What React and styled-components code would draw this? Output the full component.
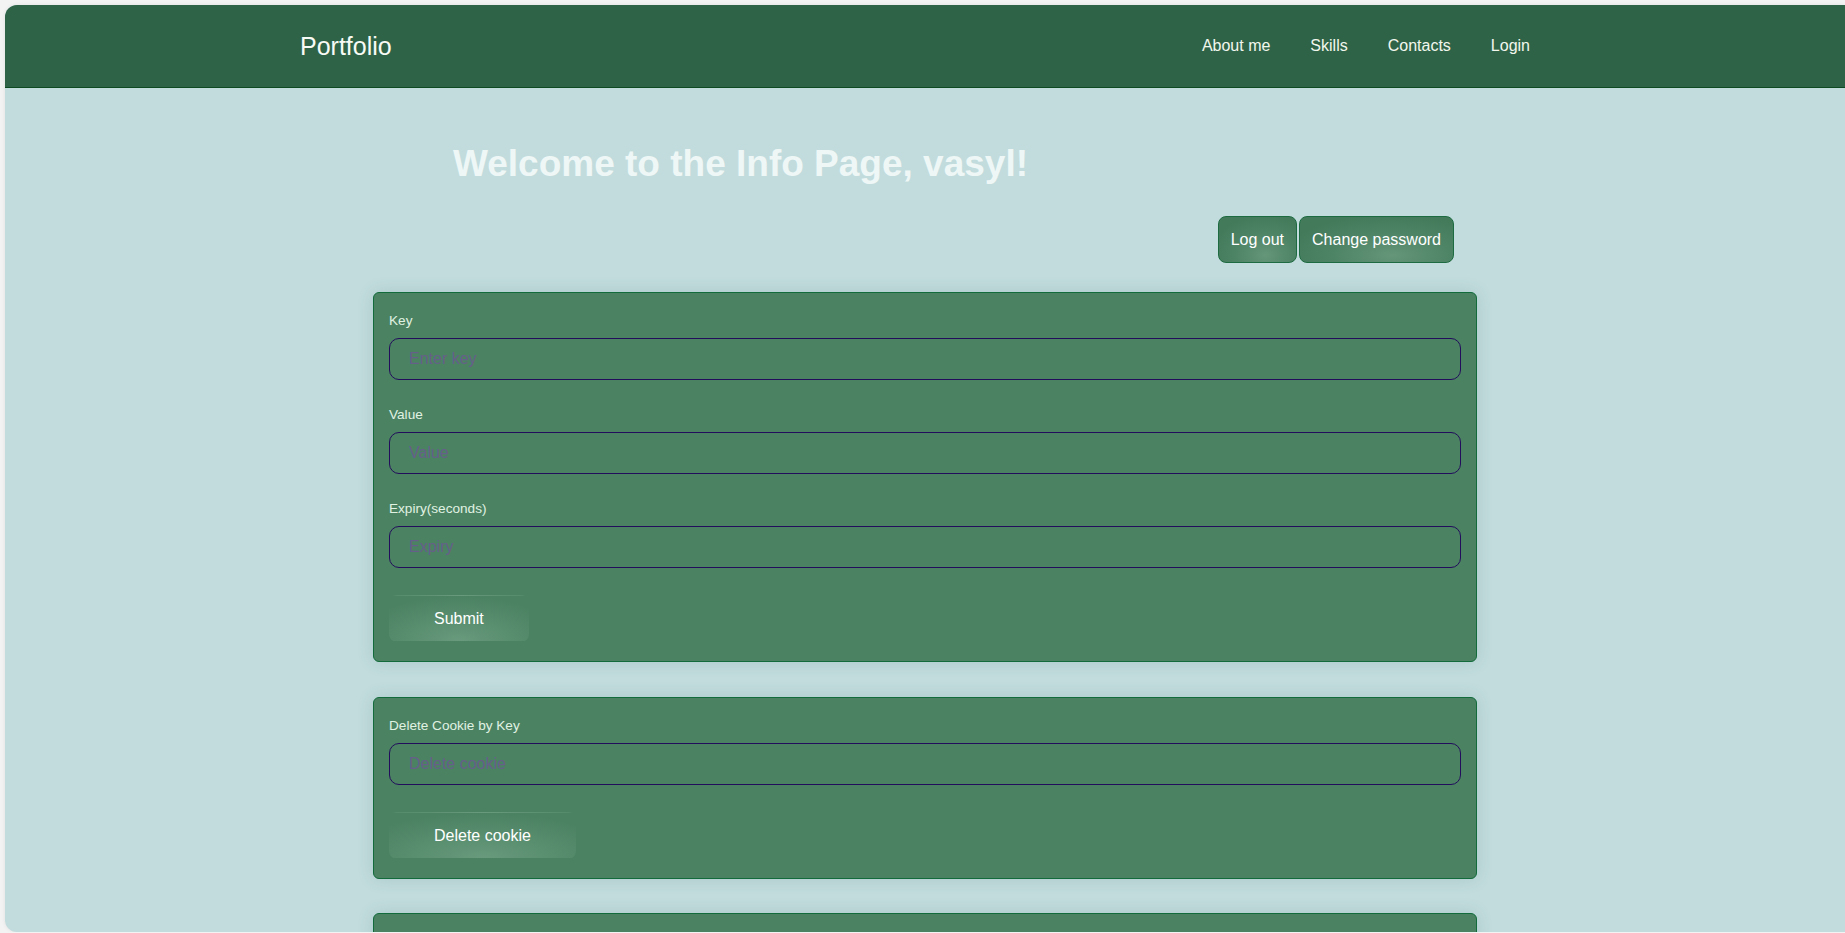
import React from "react";
import styled, { createGlobalStyle } from "styled-components";

const Global = createGlobalStyle`
  html, body {
    margin: 0;
    padding: 0;
    background: #f3f3f3;
    overflow: hidden;
  }
  body {
    font-family: "Liberation Sans", Arial, sans-serif;
  }
  * { box-sizing: border-box; }
`;

const Frame = styled.div`
  margin: 5px 0 0 5px;
  height: 927px;
  width: calc(100% - 5px);
  background: #c2dcdd;
  border-radius: 12px 0 0 12px;
  overflow: hidden;
  box-shadow: 0 0 4px rgba(0, 0, 0, 0.08);
  display: flex;
  flex-direction: column;
`;

const Header = styled.header`
  flex: none;
  height: 83px;
  background: #2f6347;
  border-bottom: 1px solid #0d4a22;
  display: flex;
  justify-content: center;
`;

const HeaderInner = styled.div`
  width: 1280px;
  padding: 0 15px;
  display: flex;
  align-items: center;
  justify-content: space-between;
`;

const Brand = styled.a`
  font-size: 25px;
  color: #f7fbf5;
  text-decoration: none;
  margin-top: 1px;
`;

const Nav = styled.nav`
  display: flex;
  align-items: center;
`;

const NavLink = styled.a`
  font-size: 16px;
  color: #f2f7ee;
  text-decoration: none;
  padding: 0 20px;
`;

const Main = styled.main`
  width: 1104px;
  margin: 0 auto;
  display: flex;
  flex-direction: column;
`;

const Title = styled.h1`
  margin: 54px 0 0;
  padding-left: 80px;
  font-size: 37px;
  line-height: 43px;
  font-weight: bold;
  color: #eef7f6;
`;

const Actions = styled.div`
  display: flex;
  justify-content: flex-end;
  gap: 2px;
  padding-right: 23px;
  margin-top: 31px;
`;

const PillButton = styled.button`
  height: 47px;
  padding: 0 12px;
  font-family: inherit;
  font-size: 16px;
  color: #ffffff;
  border: 1px solid #1d6b40;
  border-radius: 8px;
  background: radial-gradient(ellipse 70% 90% at 60% 85%, #659679 0%, #4e8466 55%, #427a5a 100%);
  cursor: pointer;
`;

const Card = styled.form`
  background: #4b8262;
  border: 1px solid #116b3b;
  border-radius: 6px;
  padding: 20px 15px 19px;
  box-shadow: 0 0 16px rgba(60, 110, 110, 0.18);
  margin-top: ${(p) => p.$top}px;
`;

const Group = styled.div`
  margin-bottom: 27px;
`;

const Label = styled.label`
  display: block;
  font-size: 13.6px;
  line-height: 16px;
  color: #e0f2e2;
  margin-bottom: 9px;
`;

const Input = styled.input`
  display: block;
  width: 100%;
  height: 42px;
  padding: 0 19px;
  font-family: inherit;
  font-size: 16px;
  color: #ffffff;
  background: transparent;
  border: 1px solid #220d5c;
  border-radius: 10px;
  outline: none;
  &::placeholder {
    color: #665f8a;
  }
`;

const SubmitButton = styled.button`
  display: block;
  height: 47px;
  padding: 0 44px;
  font-family: inherit;
  font-size: 16px;
  color: #ffffff;
  border: 1px solid transparent;
  border-radius: 8px;
  background: radial-gradient(ellipse 75% 100% at 50% 100%, #699a7d 0%, #5a8f70 45%, #4b8262 100%);
  cursor: pointer;
`;

export default function App() {
  const stop = (e) => e.preventDefault();
  return (
    <>
      <Global />
      <Frame>
        <Header>
          <HeaderInner>
            <Brand href="#">Portfolio</Brand>
            <Nav>
              <NavLink href="#">About me</NavLink>
              <NavLink href="#">Skills</NavLink>
              <NavLink href="#">Contacts</NavLink>
              <NavLink href="#">Login</NavLink>
            </Nav>
          </HeaderInner>
        </Header>
        <Main>
          <Title>Welcome to the Info Page, vasyl!</Title>
          <Actions>
            <PillButton type="button">Log out</PillButton>
            <PillButton type="button">Change password</PillButton>
          </Actions>
          <Card $top={29} onSubmit={stop}>
            <Group>
              <Label htmlFor="k">Key</Label>
              <Input id="k" placeholder="Enter key" />
            </Group>
            <Group>
              <Label htmlFor="v">Value</Label>
              <Input id="v" placeholder="Value" />
            </Group>
            <Group>
              <Label htmlFor="e">Expiry(seconds)</Label>
              <Input id="e" placeholder="Expiry" />
            </Group>
            <SubmitButton type="submit">Submit</SubmitButton>
          </Card>
          <Card $top={35} onSubmit={stop}>
            <Group>
              <Label htmlFor="d">Delete Cookie by Key</Label>
              <Input id="d" placeholder="Delete cookie" />
            </Group>
            <SubmitButton type="submit">Delete cookie</SubmitButton>
          </Card>
          <Card $top={34} onSubmit={stop}>
            <Group>
              <Label htmlFor="g">Get Cookie by Key</Label>
              <Input id="g" placeholder="Get cookie" />
            </Group>
            <SubmitButton type="submit">Get cookie</SubmitButton>
          </Card>
        </Main>
      </Frame>
    </>
  );
}
